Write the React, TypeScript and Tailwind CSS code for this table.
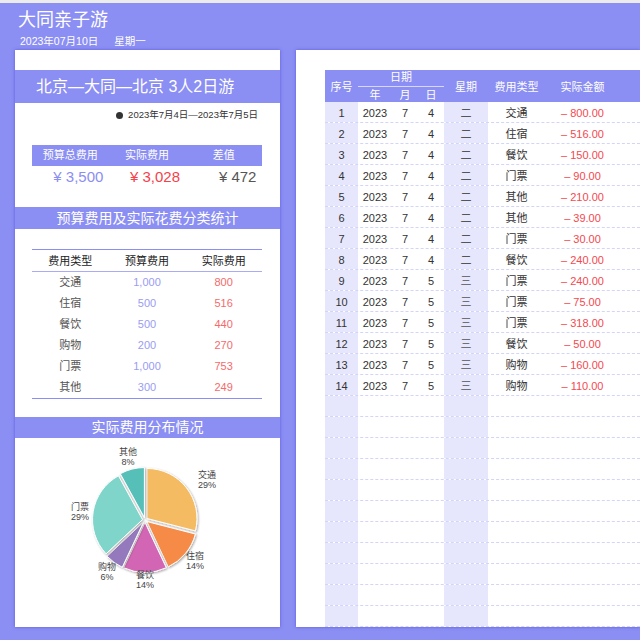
import React from 'react';

const font = { fontFamily: '"Liberation Sans", "Noto Sans CJK SC", sans-serif' };

const categories = [
  { type: '交通', budget: '1,000', actual: '800' },
  { type: '住宿', budget: '500', actual: '516' },
  { type: '餐饮', budget: '500', actual: '440' },
  { type: '购物', budget: '200', actual: '270' },
  { type: '门票', budget: '1,000', actual: '753' },
  { type: '其他', budget: '300', actual: '249' },
];

const records = [
  { d: 4, w: '二', type: '交通', amt: '800.00' },
  { d: 4, w: '二', type: '住宿', amt: '516.00' },
  { d: 4, w: '二', type: '餐饮', amt: '150.00' },
  { d: 4, w: '二', type: '门票', amt: '90.00' },
  { d: 4, w: '二', type: '其他', amt: '210.00' },
  { d: 4, w: '二', type: '其他', amt: '39.00' },
  { d: 4, w: '二', type: '门票', amt: '30.00' },
  { d: 4, w: '二', type: '餐饮', amt: '240.00' },
  { d: 5, w: '三', type: '门票', amt: '240.00' },
  { d: 5, w: '三', type: '门票', amt: '75.00' },
  { d: 5, w: '三', type: '门票', amt: '318.00' },
  { d: 5, w: '三', type: '餐饮', amt: '50.00' },
  { d: 5, w: '三', type: '购物', amt: '160.00' },
  { d: 5, w: '三', type: '购物', amt: '110.00' },
];

const slices = [
  { label: '交通', pct: 29, color: '#f4bb63', lx: 192, ly: 40 },
  { label: '住宿', pct: 14, color: '#f68a47', lx: 180, ly: 121 },
  { label: '餐饮', pct: 14, color: '#d266b4', lx: 130, ly: 140 },
  { label: '购物', pct: 6, color: '#9579bd', lx: 92, ly: 132 },
  { label: '门票', pct: 29, color: '#7fd5c9', lx: 65, ly: 72 },
  { label: '其他', pct: 8, color: '#56bfb8', lx: 113, ly: 17 },
];

function Pie() {
  const cx = 130;
  const cy = 82;
  const r = 50;
  let start = 0;
  const pt = (a: number, rad: number, ox: number, oy: number) => {
    const t = (a * Math.PI) / 180;
    return [ox + rad * Math.sin(t), oy - rad * Math.cos(t)];
  };
  return (
    <svg width="265" height="189" viewBox="0 0 265 189">
      <defs>
        <filter id="sh" x="-20%" y="-20%" width="140%" height="140%">
          <feDropShadow dx="1" dy="1" stdDeviation="1" floodColor="#000" floodOpacity="0.35" />
        </filter>
      </defs>
      {slices.map((s) => {
        const sweep = (s.pct / 100) * 360;
        const end = start + sweep;
        const mid = start + sweep / 2;
        const [ox, oy] = pt(mid, 2.5, cx, cy);
        const [x1, y1] = pt(start, r, ox, oy);
        const [x2, y2] = pt(end, r, ox, oy);
        const large = sweep > 180 ? 1 : 0;
        const d = `M${ox},${oy} L${x1},${y1} A${r},${r} 0 ${large} 1 ${x2},${y2} Z`;
        start = end;
        return <path key={s.label} d={d} fill={s.color} stroke="#fff" strokeWidth="1" filter="url(#sh)" />;
      })}
      {slices.map((s) => (
        <text key={s.label + 't'} x={s.lx} y={s.ly} textAnchor="middle" fontSize="9" fill="#444" style={font}>
          <tspan x={s.lx} dy="0">{s.label}</tspan>
          <tspan x={s.lx} dy="10">{s.pct}%</tspan>
        </text>
      ))}
    </svg>
  );
}

const band = 'bg-[#8b8ef2] text-white flex items-center';
const cols = 'grid grid-cols-[33px_34px_26px_26px_44px_57px_75px_1fr]';
const cell = 'flex items-center justify-center pt-[2px]';

export default function App() {
  return (
    <div className="w-[640px] h-[640px] bg-[#8b8ef2] overflow-hidden flex flex-col" style={font}>
      <div className="h-[3px] bg-[#ececec] shrink-0" />
      <div className="h-[47px] shrink-0 pl-[18px] text-white">
        <div className="text-[18px] leading-[22px] pt-[6px]">大同亲子游</div>
        <div className="text-[10.5px] leading-[12px] pt-[4px] pl-[2px] flex gap-[16px]">
          <span>2023年07月10日</span>
          <span>星期一</span>
        </div>
      </div>
      <div className="flex h-[577px] shrink-0">
        <div className="ml-[15px] w-[265px] bg-white flex flex-col shadow-[0_0_3px_rgba(70,70,220,0.7)]">
          <div className="h-[20px]" />
          <div className={`${band} h-[33px] pl-[21px] text-[16px]`}>北京—大同—北京 3人2日游</div>
          <div className="h-[104px] px-[17px]">
            <div className="flex justify-end items-center gap-[5px] pr-[5px] pt-[6px] text-[9.5px] text-[#333] leading-[12px]">
              <span className="w-[7px] h-[7px] rounded-full bg-[#333]" />
              <span>2023年7月4日—2023年7月5日</span>
            </div>
            <div className="mt-[24px] w-[230px] grid grid-cols-3 h-[21px] bg-[#8b8ef2] text-white text-[11px] items-center text-center">
              <span>预算总费用</span>
              <span>实际费用</span>
              <span>差值</span>
            </div>
            <div className="w-[230px] grid grid-cols-3 h-[22px] items-center text-center text-[15px]">
              <span className="pl-4 text-[#8b8ef2]">¥ 3,500</span>
              <span className="pl-4 text-[#f5414a]">¥ 3,028</span>
              <span className="pl-7 text-[#555]">¥ 472</span>
            </div>
          </div>
          <div className={`${band} h-[22px] justify-center text-[14px]`}>预算费用及实际花费分类统计</div>
          <div className="h-[188px] px-[17px] pt-[20px]">
            <div className="w-[230px] border-t border-b border-[#8b8ef2] text-[11px]">
              <div className="grid grid-cols-3 h-[22px] pt-[2px] items-center text-center text-[#222] border-b border-[#a9abf5]">
                <span>费用类型</span>
                <span>预算费用</span>
                <span>实际费用</span>
              </div>
              {categories.map((c) => (
                <div key={c.type} className="grid grid-cols-3 h-[21px] items-center text-center">
                  <span className="text-[#555]">{c.type}</span>
                  <span className="text-[#9a9cf2]">{c.budget}</span>
                  <span className="text-[#f56a6a]">{c.actual}</span>
                </div>
              ))}
            </div>
          </div>
          <div className={`${band} h-[21px] justify-center text-[14px]`}>实际费用分布情况</div>
          <div className="flex-1">
            <Pie />
          </div>
        </div>
        <div className="ml-[16px] flex-1 bg-white pl-[29px] pt-[20px] shadow-[0_0_3px_rgba(70,70,220,0.7)]">
          <div className={`${cols} grid-rows-[17px_15px] h-[32px] bg-[#8b8ef2] text-white text-[11px]`}>
            <div className="row-span-2 flex items-center justify-center pt-[3px]">序号</div>
            <div className="col-span-3 flex items-end justify-center border-b border-[#d6d7fb] pb-[1px]">日期</div>
            <div className="row-span-2 flex items-center justify-center pt-[3px]">星期</div>
            <div className="row-span-2 flex items-center justify-center pt-[3px]">费用类型</div>
            <div className="row-span-2 flex items-center justify-center pt-[3px]">实际金额</div>
            <div className="row-span-2" />
            <div className="flex items-center justify-center pt-[2px]">年</div>
            <div className="flex items-center justify-center pt-[2px]">月</div>
            <div className="flex items-center justify-center pt-[2px]">日</div>
          </div>
          {Array.from({ length: 25 }).map((_, i) => {
            const r = records[i];
            return (
              <div key={i} className={`${cols} h-[21px] border-b border-dashed border-[#d3d5f8] text-[11px] text-[#333]`}>
                <div className={`${cell} bg-[#e6e7fd]`}>{r ? i + 1 : ''}</div>
                <div className={cell}>{r ? '2023' : ''}</div>
                <div className={cell}>{r ? '7' : ''}</div>
                <div className={cell}>{r ? r.d : ''}</div>
                <div className={`${cell} bg-[#e6e7fd] text-[#555]`}>{r ? r.w : ''}</div>
                <div className={cell}>{r ? r.type : ''}</div>
                <div className={`${cell} text-[#f5484f]`}>{r ? `– ${r.amt}` : ''}</div>
                <div />
              </div>
            );
          })}
        </div>
      </div>
    </div>
  );
}
